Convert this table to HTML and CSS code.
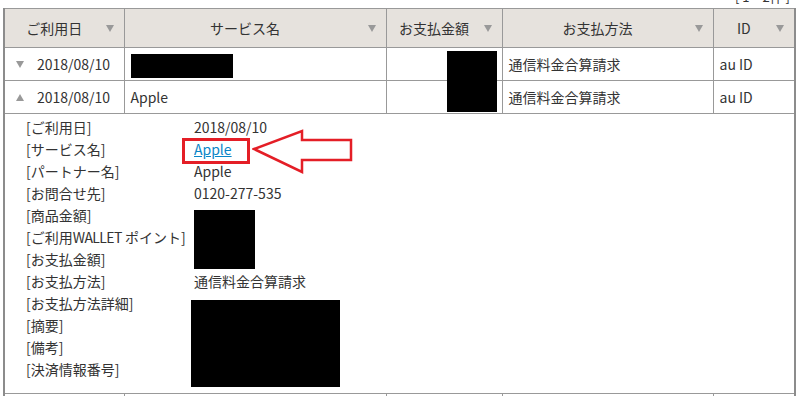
FILE: index.html
```html
<!DOCTYPE html>
<html lang="ja">
<head>
    <meta charset="UTF-8">
    <meta name="viewport" content="width=device-width, initial-scale=1.0">
    <title>ご利用履歴</title>
    <link rel="stylesheet" href="styles.css">
</head>
<body>
    <div class="page">
        <div class="count"><span>[ 1～2件 ]</span></div>

        <div class="history">
            <table class="list">
                <colgroup>
                    <col class="c-date">
                    <col class="c-service">
                    <col class="c-amount">
                    <col class="c-method">
                    <col class="c-id">
                </colgroup>
                <thead>
                    <tr>
                        <th><div class="sort"><span>ご利用日</span><i class="tri"></i></div></th>
                        <th><div class="sort"><span>サービス名</span><i class="tri"></i></div></th>
                        <th><div class="sort"><span>お支払金額</span><i class="tri"></i></div></th>
                        <th><div class="sort"><span>お支払方法</span><i class="tri"></i></div></th>
                        <th><div class="sort"><span>ID</span><i class="tri"></i></div></th>
                    </tr>
                </thead>
                <tbody>
                    <tr>
                        <td class="date"><i class="toggle down"></i>2018/08/10</td>
                        <td><span class="mask mask-service"></span></td>
                        <td></td>
                        <td>通信料金合算請求</td>
                        <td>au ID</td>
                    </tr>
                    <tr>
                        <td class="date"><i class="toggle up"></i>2018/08/10</td>
                        <td>Apple</td>
                        <td></td>
                        <td>通信料金合算請求</td>
                        <td>au ID</td>
                    </tr>
                    <tr>
                        <td colspan="5" class="detail">
                            <dl class="info">
                                <dt>[ご利用日]</dt><dd>2018/08/10</dd>
                                <dt>[サービス名]</dt><dd><a href="#">Apple</a></dd>
                                <dt>[パートナー名]</dt><dd>Apple</dd>
                                <dt>[お問合せ先]</dt><dd>0120-277-535</dd>
                                <dt>[商品金額]</dt><dd></dd>
                                <dt>[ご利用<span class="latin">WALLET</span> ポイント]</dt><dd></dd>
                                <dt>[お支払金額]</dt><dd></dd>
                                <dt>[お支払方法]</dt><dd>通信料金合算請求</dd>
                                <dt>[お支払方法詳細]</dt><dd></dd>
                                <dt>[摘要]</dt><dd></dd>
                                <dt>[備考]</dt><dd></dd>
                                <dt>[決済情報番号]</dt><dd></dd>
                            </dl>
                        </td>
                    </tr>
                    <tr class="next">
                        <td></td><td></td><td></td><td></td><td></td>
                    </tr>
                </tbody>
            </table>

            <!-- blacked-out values -->
            <span class="mask mask-amount"></span>
            <span class="mask mask-price"></span>
            <span class="mask mask-payinfo"></span>

            <!-- red callout on the service link -->
            <span class="callout-box"></span>
            <svg class="callout-arrow" width="104" height="48" viewBox="0 0 104 48">
                <path d="M2 20 L50 2 L50 11 L99 11 L99 31 L50 31 L50 43 Z"
                      fill="none" stroke="#e41e26" stroke-width="2.5" stroke-linejoin="miter"/>
            </svg>
        </div>
    </div>
</body>
</html>
```

FILE: styles.css
```css
body {
    margin: 0;
    background: #fff;
    font-family: "Noto Sans CJK JP", "DejaVu Sans", sans-serif;
    font-size: 14px;
    color: #333;
    overflow: hidden;
}
.page {
    padding: 0 6px 0 3px;
}
/* record count line, scrolled mostly out of view */
.count {
    height: 8px;
    overflow: hidden;
    text-align: right;
    font-size: 13px;
    line-height: 13px;
    padding-right: 4px;
}
.count span {
    display: block;
    margin-top: -10px;
}
.history {
    position: relative;
}
.list {
    width: 791px;
    table-layout: fixed;
    border-collapse: collapse;
    border-left: 2px solid #8c8c8c;
    border-right: 2px solid #8c8c8c;
    border-top: 1px solid #999;
}
.c-date { width: 120px; }
.c-service { width: 262px; }
.c-amount { width: 116px; }
.c-method { width: 211px; }
.c-id { width: 82px; }

.list th {
    height: 38px;
    padding: 0;
    background: #e6e2dd;
    font-weight: normal;
    border: 1px solid #999;
    border-top: none;
}
.sort {
    display: flex;
    align-items: center;
    padding: 0 10px 0 8px;
}
.sort span {
    flex: 1;
    text-align: center;
    padding-right: 10px;
}
.tri {
    width: 0;
    height: 0;
    border-left: 4px solid transparent;
    border-right: 4px solid transparent;
    border-top: 7px solid #999;
}
.list td {
    height: 32px;
    padding: 0 6px;
    border: 1px solid #999;
    vertical-align: middle;
    white-space: nowrap;
}
.list td.date {
    padding-left: 11px;
}
.toggle {
    display: inline-block;
    width: 0;
    height: 0;
    margin-right: 13px;
    vertical-align: 2px;
    border-left: 4px solid transparent;
    border-right: 4px solid transparent;
}
.toggle.down { border-top: 7px solid #999; }
.toggle.up { border-bottom: 7px solid #999; }

.list td.detail {
    height: auto;
    padding: 2px 0 13px 21px;
    vertical-align: top;
}
.info {
    margin: 0;
    display: grid;
    grid-template-columns: 168px 1fr;
    grid-auto-rows: 22px;
    line-height: 22px;
}
.info dt, .info dd {
    margin: 0;
}
.info .latin {
    letter-spacing: -0.6px;
}
.info a {
    color: #0a85c7;
}
.list tr.next td {
    height: 4px;
    border-bottom: none;
}

.mask {
    display: inline-block;
    background: #000;
}
.mask-service {
    width: 102px;
    height: 24px;
    vertical-align: middle;
    margin-top: 4px;
}
.mask-amount {
    position: absolute;
    left: 444px;
    top: 43px;
    width: 50px;
    height: 61px;
}
.mask-price {
    position: absolute;
    left: 191px;
    top: 202px;
    width: 61px;
    height: 59px;
}
.mask-payinfo {
    position: absolute;
    left: 188px;
    top: 292px;
    width: 149px;
    height: 87px;
}
.callout-box {
    position: absolute;
    left: 179px;
    top: 130px;
    width: 62px;
    height: 20px;
    border: 3px solid #e41e26;
}
.callout-arrow {
    position: absolute;
    left: 249px;
    top: 121px;
}
```
